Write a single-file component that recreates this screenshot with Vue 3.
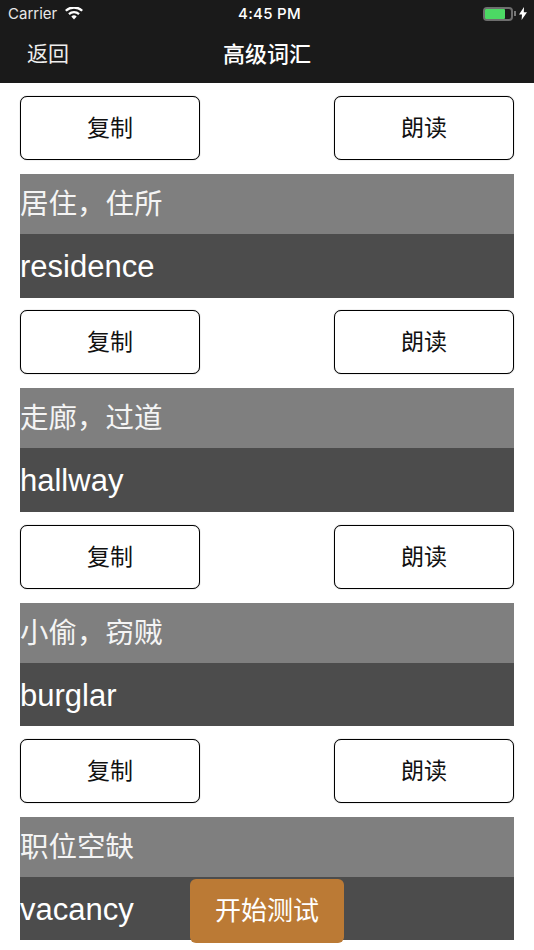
<template>
  <div class="page">
    <header class="nav">
      <div class="status">
        <div class="status-left">
          <span class="carrier">Carrier</span>
          <svg class="wifi" viewBox="0 0 18 13" width="18" height="13">
            <path d="M9 12.6 6.3 9.6a3.9 3.9 0 0 1 5.4 0Z" fill="#fff" />
            <path d="M4.7 7.9a6.2 6.2 0 0 1 8.6 0l1.5-1.6a8.4 8.4 0 0 0-11.6 0Z" fill="#fff" />
            <path d="M1.6 4.6a10.7 10.7 0 0 1 14.8 0L18 2.9A13 13 0 0 0 0 2.9Z" fill="#fff" />
          </svg>
        </div>
        <span class="time">4:45 PM</span>
        <div class="status-right">
          <div class="battery"><div class="battery-fill"></div></div>
          <div class="battery-tip"></div>
          <svg class="bolt" viewBox="0 0 8 13" width="8" height="13">
            <path d="M5 0 0 7.400h3L2.600 13 8 5.300H4.800Z" fill="#fff" />
          </svg>
        </div>
      </div>
      <div class="title-bar">
        <span class="back">返回</span>
        <span class="title">高级词汇</span>
      </div>
    </header>

    <main class="list">
      <section v-for="(w, i) in words" :key="i" class="entry">
        <div class="actions">
          <button class="btn">复制</button>
          <button class="btn">朗读</button>
        </div>
        <div class="meaning">{{ w.zh }}</div>
        <div class="word">{{ w.en }}</div>
      </section>
    </main>

    <button class="start">开始测试</button>
  </div>
</template>

<script setup>
const words = [
  { zh: '居住，住所', en: 'residence' },
  { zh: '走廊，过道', en: 'hallway' },
  { zh: '小偷，窃贼', en: 'burglar' },
  { zh: '职位空缺', en: 'vacancy' }
]
</script>

<style>
html, body {
  margin: 0;
  background: #fff;
}
</style>

<style scoped>
.page {
  position: relative;
  width: 534px;
  height: 950px;
  overflow: hidden;
  font-family: "Liberation Sans", "Noto Sans CJK SC", sans-serif;
}
.nav {
  height: 83px;
  background: #1a1a1a;
  color: #fff;
}
.status {
  height: 27px;
  display: flex;
  align-items: center;
  justify-content: space-between;
  padding: 0 7px 0 8px;
  font-size: 15px;
  font-family: Inter, "Liberation Sans", sans-serif;
  position: relative;
}
.status-left {
  display: flex;
  align-items: center;
  gap: 8px;
}
.carrier {
  color: #e8e8e8;
}
.wifi {
  margin-top: -1px;
}
.time {
  position: absolute;
  left: 238px;
  font-weight: 500;
  font-size: 15px;
  letter-spacing: 0.3px;
}
.status-right {
  display: flex;
  align-items: center;
}
.battery {
  width: 30px;
  height: 14px;
  box-sizing: border-box;
  border: 2px solid #6e6e6e;
  border-radius: 4px;
}
.battery-fill {
  width: 20px;
  height: 100%;
  background: #4cd964;
  border-radius: 1px;
}
.battery-tip {
  width: 2px;
  height: 5px;
  background: #777;
  margin-left: 1px;
}
.bolt {
  margin-left: 3px;
}
.title-bar {
  height: 56px;
  position: relative;
  display: flex;
  align-items: center;
  justify-content: center;
}
.back {
  position: absolute;
  left: 27px;
  top: 13px;
  font-size: 21px;
  line-height: 27px;
  color: #eee;
}
.title {
  font-size: 22px;
  font-weight: 500;
  margin-bottom: 7px;
}
.list {
  padding: 13px 20px 0;
}
.entry {
  padding-bottom: 12.750px;
}
.actions {
  display: flex;
  justify-content: space-between;
  margin-bottom: 14px;
}
.btn {
  width: 180px;
  height: 64px;
  box-sizing: border-box;
  background: #fff;
  border: 1px solid #000;
  border-radius: 7px;
  box-shadow: 0 0 1px rgba(0, 0, 0, 0.6);
  font-family: inherit;
  font-size: 23px;
  color: #111;
  padding: 0 0 4px;
}
.meaning {
  height: 60px;
  line-height: 60px;
  background: #7f7f7f;
  color: #f4f4f4;
  font-size: 28.500px;
  white-space: nowrap;
}
.word {
  height: 63.500px;
  line-height: 66px;
  background: #4c4c4c;
  color: #fff;
  font-size: 31px;
}
.start {
  position: absolute;
  left: 190px;
  top: 879px;
  width: 154px;
  height: 64px;
  border: none;
  border-radius: 6px;
  background: #bb7a35;
  color: #fff;
  font-family: inherit;
  font-size: 26px;
  padding: 0 0 5px;
}
</style>
